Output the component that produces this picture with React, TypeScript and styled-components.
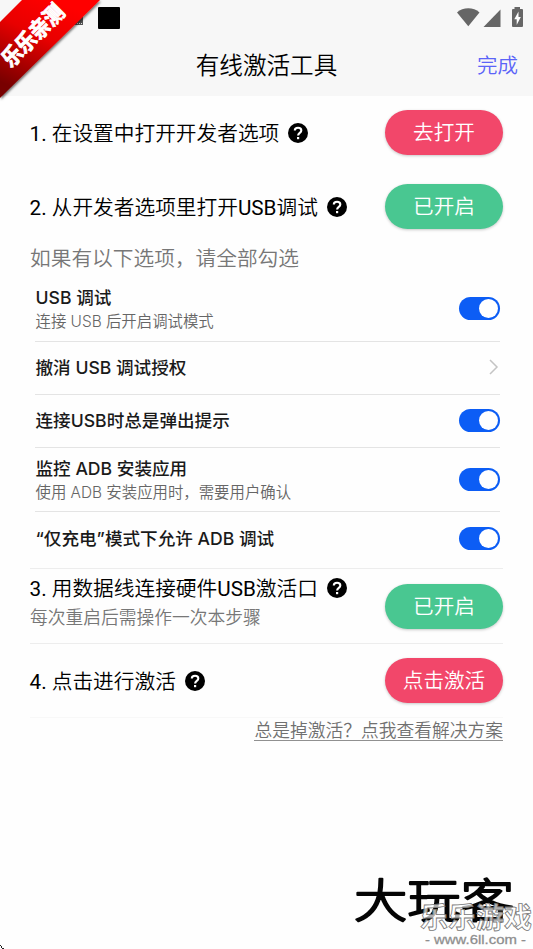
import React from "react";
import styled, { createGlobalStyle } from "styled-components";

const Global = createGlobalStyle`
  * { box-sizing: border-box; }
  html, body, #root { margin: 0; padding: 0; }
  body {
    width: 533px;
    height: 949px;
    overflow: hidden;
    background: #fefefe;
    color: #000;
    font-family: Roboto, "Noto Sans CJK SC", sans-serif;
  }
`;

const Screen = styled.div`
  position: relative;
  width: 533px;
  height: 949px;
  overflow: hidden;
`;

const Header = styled.header`
  height: 96px;
  background: #f7f7f7;
`;

const StatusBar = styled.div`
  display: flex;
  align-items: flex-start;
  height: 36px;
  padding: 7px 9px 0 98px;
`;

const Square = styled.div`
  width: 22px;
  height: 22px;
  border-radius: 1px;
  background: #000;
  margin-right: auto;
`;

const NavBar = styled.div`
  display: grid;
  grid-template-columns: 1fr auto 1fr;
  align-items: center;
  height: 60px;
  padding: 0 15px;
`;

const Title = styled.h1`
  grid-column: 2;
  margin: 0;
  font-size: 23.6px;
  line-height: 58px;
  font-weight: 350;
`;

const Done = styled.button`
  justify-self: end;
  border: 0;
  padding: 0;
  background: none;
  color: #5b64f8;
  font: 350 20.5px/60px Roboto, "Noto Sans CJK SC", sans-serif;
`;

const Main = styled.main`
  padding: 0 30px;
`;

const Step = styled.section<{ $height: number; $line?: string; $top?: number }>`
  display: flex;
  justify-content: space-between;
  align-items: flex-start;
  height: ${(p) => p.$height}px;
  padding-top: ${(p) => p.$top ?? 14}px;
  border-bottom: ${(p) => (p.$line ? `1px solid ${p.$line}` : "0")};
`;

const StepBody = styled.div<{ $shift?: number }>`
  display: flex;
  flex-direction: column;
  margin-top: ${(p) => p.$shift ?? 0}px;
`;

const StepTitle = styled.h2<{ $height?: number }>`
  display: flex;
  align-items: center;
  gap: 9px;
  height: ${(p) => p.$height ?? 45}px;
  margin: 0 0 0 -0.5px;
  font-size: 20.7px;
  font-weight: 350;
  white-space: pre;
`;

const StepText = styled.span`
  padding-bottom: 1px;
`;

const Latin = styled.span`
  font-weight: 400;
`;

const StepNote = styled.p`
  margin: 0;
  color: #777;
  font-size: 17.75px;
  line-height: 31px;
  font-weight: 350;
`;

const Pill = styled.button<{ $tone: "red" | "green" }>`
  width: 118px;
  height: 45px;
  border: 0;
  padding: 1px 0 0;
  border-radius: 23px;
  background: ${(p) => (p.$tone === "red" ? "#f2476a" : "#49c791")};
  color: #fff;
  box-shadow: 0 1px 3px rgba(0, 0, 0, 0.22);
  font: 350 20.6px/44px Roboto, "Noto Sans CJK SC", sans-serif;
`;

const Hint = styled.p`
  height: 34px;
  margin: 0;
  color: #777;
  font-size: 20.7px;
  line-height: 32px;
  font-weight: 350;
`;

const Settings = styled.div`
  padding: 0 3px 0 5px;
  font-family: Inter, "Noto Sans CJK SC", sans-serif;
`;

const Setting = styled.div<{ $height: number; $lift?: number; $last?: boolean }>`
  display: flex;
  align-items: center;
  justify-content: space-between;
  height: ${(p) => p.$height}px;
  padding-bottom: ${(p) => p.$lift ?? 2}px;
  border-bottom: ${(p) => (p.$last ? "0" : "1px solid #e4e4e4")};
`;

const SettingText = styled.div`
  padding: 1px 0 0 0.5px;
`;

const SettingTitle = styled.div`
  color: #1a1a1a;
  font-size: 17.6px;
  line-height: 25px;
  font-weight: 500;
`;

const SettingNote = styled.div`
  color: #666;
  font-size: 15.4px;
  line-height: 23px;
  font-weight: 350;
`;

const Toggle = styled.span`
  display: flex;
  justify-content: flex-end;
  width: 41px;
  height: 23px;
  padding: 2px;
  border-radius: 12px;
  background: #0c5df5;
  &::after {
    content: "";
    width: 19px;
    height: 19px;
    border-radius: 50%;
    background: #fff;
  }
`;

const Divider = styled.div`
  height: 1px;
  background: #ededed;
`;

const SupportLink = styled.a`
  display: block;
  margin-left: auto;
  width: fit-content;
  height: 23px;
  border-bottom: 1px solid #909090;
  color: #707070;
  font-size: 17.75px;
  line-height: 27px;
  font-weight: 350;
`;

const Ribbon = styled.svg`
  position: absolute;
  left: 0;
  top: 0;
`;

const Watermark = styled.svg`
  position: absolute;
  right: 0;
  bottom: 0;
`;

const Corner = styled.svg`
  position: absolute;
  left: 0;
  bottom: 0;
`;

const Help = () => (
  <svg width="20" height="20" viewBox="0 0 20 20">
    <circle cx="10" cy="10" r="10" fill="#000" />
    <path
      d="M6.800 7.500C6.800 3.900 13.300 3.900 13.300 7.500C13.300 9.900 10.100 9.900 10.100 12.600"
      fill="none"
      stroke="#fff"
      strokeWidth="2.1"
    />
    <rect x="9" y="14" width="2.200" height="2.200" fill="#fff" />
  </svg>
);

const StatusIcons = () => (
  <svg width="68" height="22" viewBox="456 7 68 22">
    <g fill="#666">
      <path d="M457 12.400C463 7 473.500 7 479.500 12.400L468.300 26.200Z" />
      <path d="M500.500 9.500V27H483.500Z" />
      <path d="M514.500 7H520V9H522Q523 9 523 10V26Q523 27 522 27H513Q512 27 512 26V10Q512 9 513 9H514.500Z" />
    </g>
    <path d="M518.500 11.500L514.300 19.300H516.700V25L520.800 17H518.500Z" fill="#fff" />
  </svg>
);

const Chevron = () => (
  <svg width="12" height="16" viewBox="0 0 12 16">
    <path d="M2 1L9 8L2 15" fill="none" stroke="#c4c4c4" strokeWidth="1.500" />
  </svg>
);

const ZH = '"Noto Sans CJK SC", sans-serif';

export default function App() {
  return (
    <Screen>
      <Global />
      <Header>
        <StatusBar>
          <Square />
          <StatusIcons />
        </StatusBar>
        <NavBar>
          <Title>有线激活工具</Title>
          <Done>完成</Done>
        </NavBar>
      </Header>
      <Main>
        <Step $height={74}>
          <StepTitle><StepText><Latin>1. </Latin>在设置中打开开发者选项</StepText><Help /></StepTitle>
          <Pill $tone="red">去打开</Pill>
        </Step>
        <Step $height={73}>
          <StepTitle><StepText><Latin>2. </Latin>从开发者选项里打开<Latin>USB</Latin>调试</StepText><Help /></StepTitle>
          <Pill $tone="green">已开启</Pill>
        </Step>
        <Hint>如果有以下选项，请全部勾选</Hint>
        <Settings>
          <Setting $height={65}>
            <SettingText>
              <SettingTitle>USB 调试</SettingTitle>
              <SettingNote>连接 USB 后开启调试模式</SettingNote>
            </SettingText>
            <Toggle />
          </Setting>
          <Setting $height={53}>
            <SettingText>
              <SettingTitle>撤消 USB 调试授权</SettingTitle>
            </SettingText>
            <Chevron />
          </Setting>
          <Setting $height={53}>
            <SettingText>
              <SettingTitle>连接USB时总是弹出提示</SettingTitle>
            </SettingText>
            <Toggle />
          </Setting>
          <Setting $height={64} $lift={1}>
            <SettingText>
              <SettingTitle>监控 ADB 安装应用</SettingTitle>
              <SettingNote>使用 ADB 安装应用时，需要用户确认</SettingNote>
            </SettingText>
            <Toggle />
          </Setting>
          <Setting $height={56} $lift={4} $last>
            <SettingText>
              <SettingTitle>“仅充电”模式下允许 ADB 调试</SettingTitle>
            </SettingText>
            <Toggle />
          </Setting>
        </Settings>
        <Divider />
        <Step $height={75} $top={15} $line="#ededed">
          <StepBody $shift={-12}>
            <StepTitle $height={31}><StepText><Latin>3. </Latin>用数据线连接硬件<Latin>USB</Latin>激活口</StepText><Help /></StepTitle>
            <StepNote>每次重启后需操作一次本步骤</StepNote>
          </StepBody>
          <Pill $tone="green">已开启</Pill>
        </Step>
        <Step $height={74} $line="#f8f8f8">
          <StepTitle><StepText><Latin>4. </Latin>点击进行激活</StepText><Help /></StepTitle>
          <Pill $tone="red">点击激活</Pill>
        </Step>
        <SupportLink>总是掉激活？点我查看解决方案</SupportLink>
      </Main>

      <Ribbon width="125" height="104" viewBox="0 0 125 104">
        <defs>
          <linearGradient id="fade" gradientUnits="userSpaceOnUse" x1="55" y1="0" x2="14" y2="88">
            <stop offset="0" stopColor="#ff0606" />
            <stop offset="0.4" stopColor="#e80000" />
            <stop offset="1" stopColor="#780000" />
          </linearGradient>
          <filter id="shade">
            <feDropShadow dx="1" dy="1.500" stdDeviation="1.300" floodOpacity="0.55" />
          </filter>
        </defs>
        <path d="M74 16H83V25H74Z" fill="#555" />
        <path d="M77 23.500H82" stroke="#ddd" strokeDasharray="1 1" />
        <path d="M22 0H100L0 98V22Z" fill="url(#fade)" filter="url(#shade)" />
        <text
          transform="translate(11 68.500) rotate(-45)"
          fill="#fff"
          fontFamily={ZH}
          fontWeight="700"
          fontSize="22"
          stroke="#fff"
          strokeWidth="0.9"
          textLength="78"
          lengthAdjust="spacingAndGlyphs"
        >
          乐乐亲测
        </text>
      </Ribbon>

      <Watermark width="193" height="84" viewBox="340 865 193 84">
        <text
          x="354"
          y="917"
          fontFamily={ZH}
          fontWeight="300"
          fontSize="46"
          textLength="160"
          lengthAdjust="spacingAndGlyphs"
          fill="#050505"
          stroke="#050505"
          strokeWidth="2"
          strokeLinejoin="round"
          strokeLinecap="round"
        >
          大玩客
        </text>
        <text
          x="420"
          y="928"
          fontFamily={ZH}
          fontWeight="700"
          fontSize="28"
          textLength="112"
          lengthAdjust="spacingAndGlyphs"
          fill="#fff"
          fillOpacity="0.7"
          stroke="#777"
          strokeWidth="0.8"
        >
          乐乐游戏
        </text>
        <text
          x="425"
          y="943.500"
          fontFamily='"Liberation Sans", sans-serif'
          fontSize="13"
          textLength="101"
          lengthAdjust="spacingAndGlyphs"
          fill="#888"
          stroke="#999"
          strokeWidth="0.300"
        >
          - www.6ll.com -
        </text>
      </Watermark>

      <Corner width="6" height="6" viewBox="0 0 6 6">
        <path d="M0 2H1V3H2V5H4V6H2V5H1V3H0Z" fill="#222" />
      </Corner>
    </Screen>
  );
}
